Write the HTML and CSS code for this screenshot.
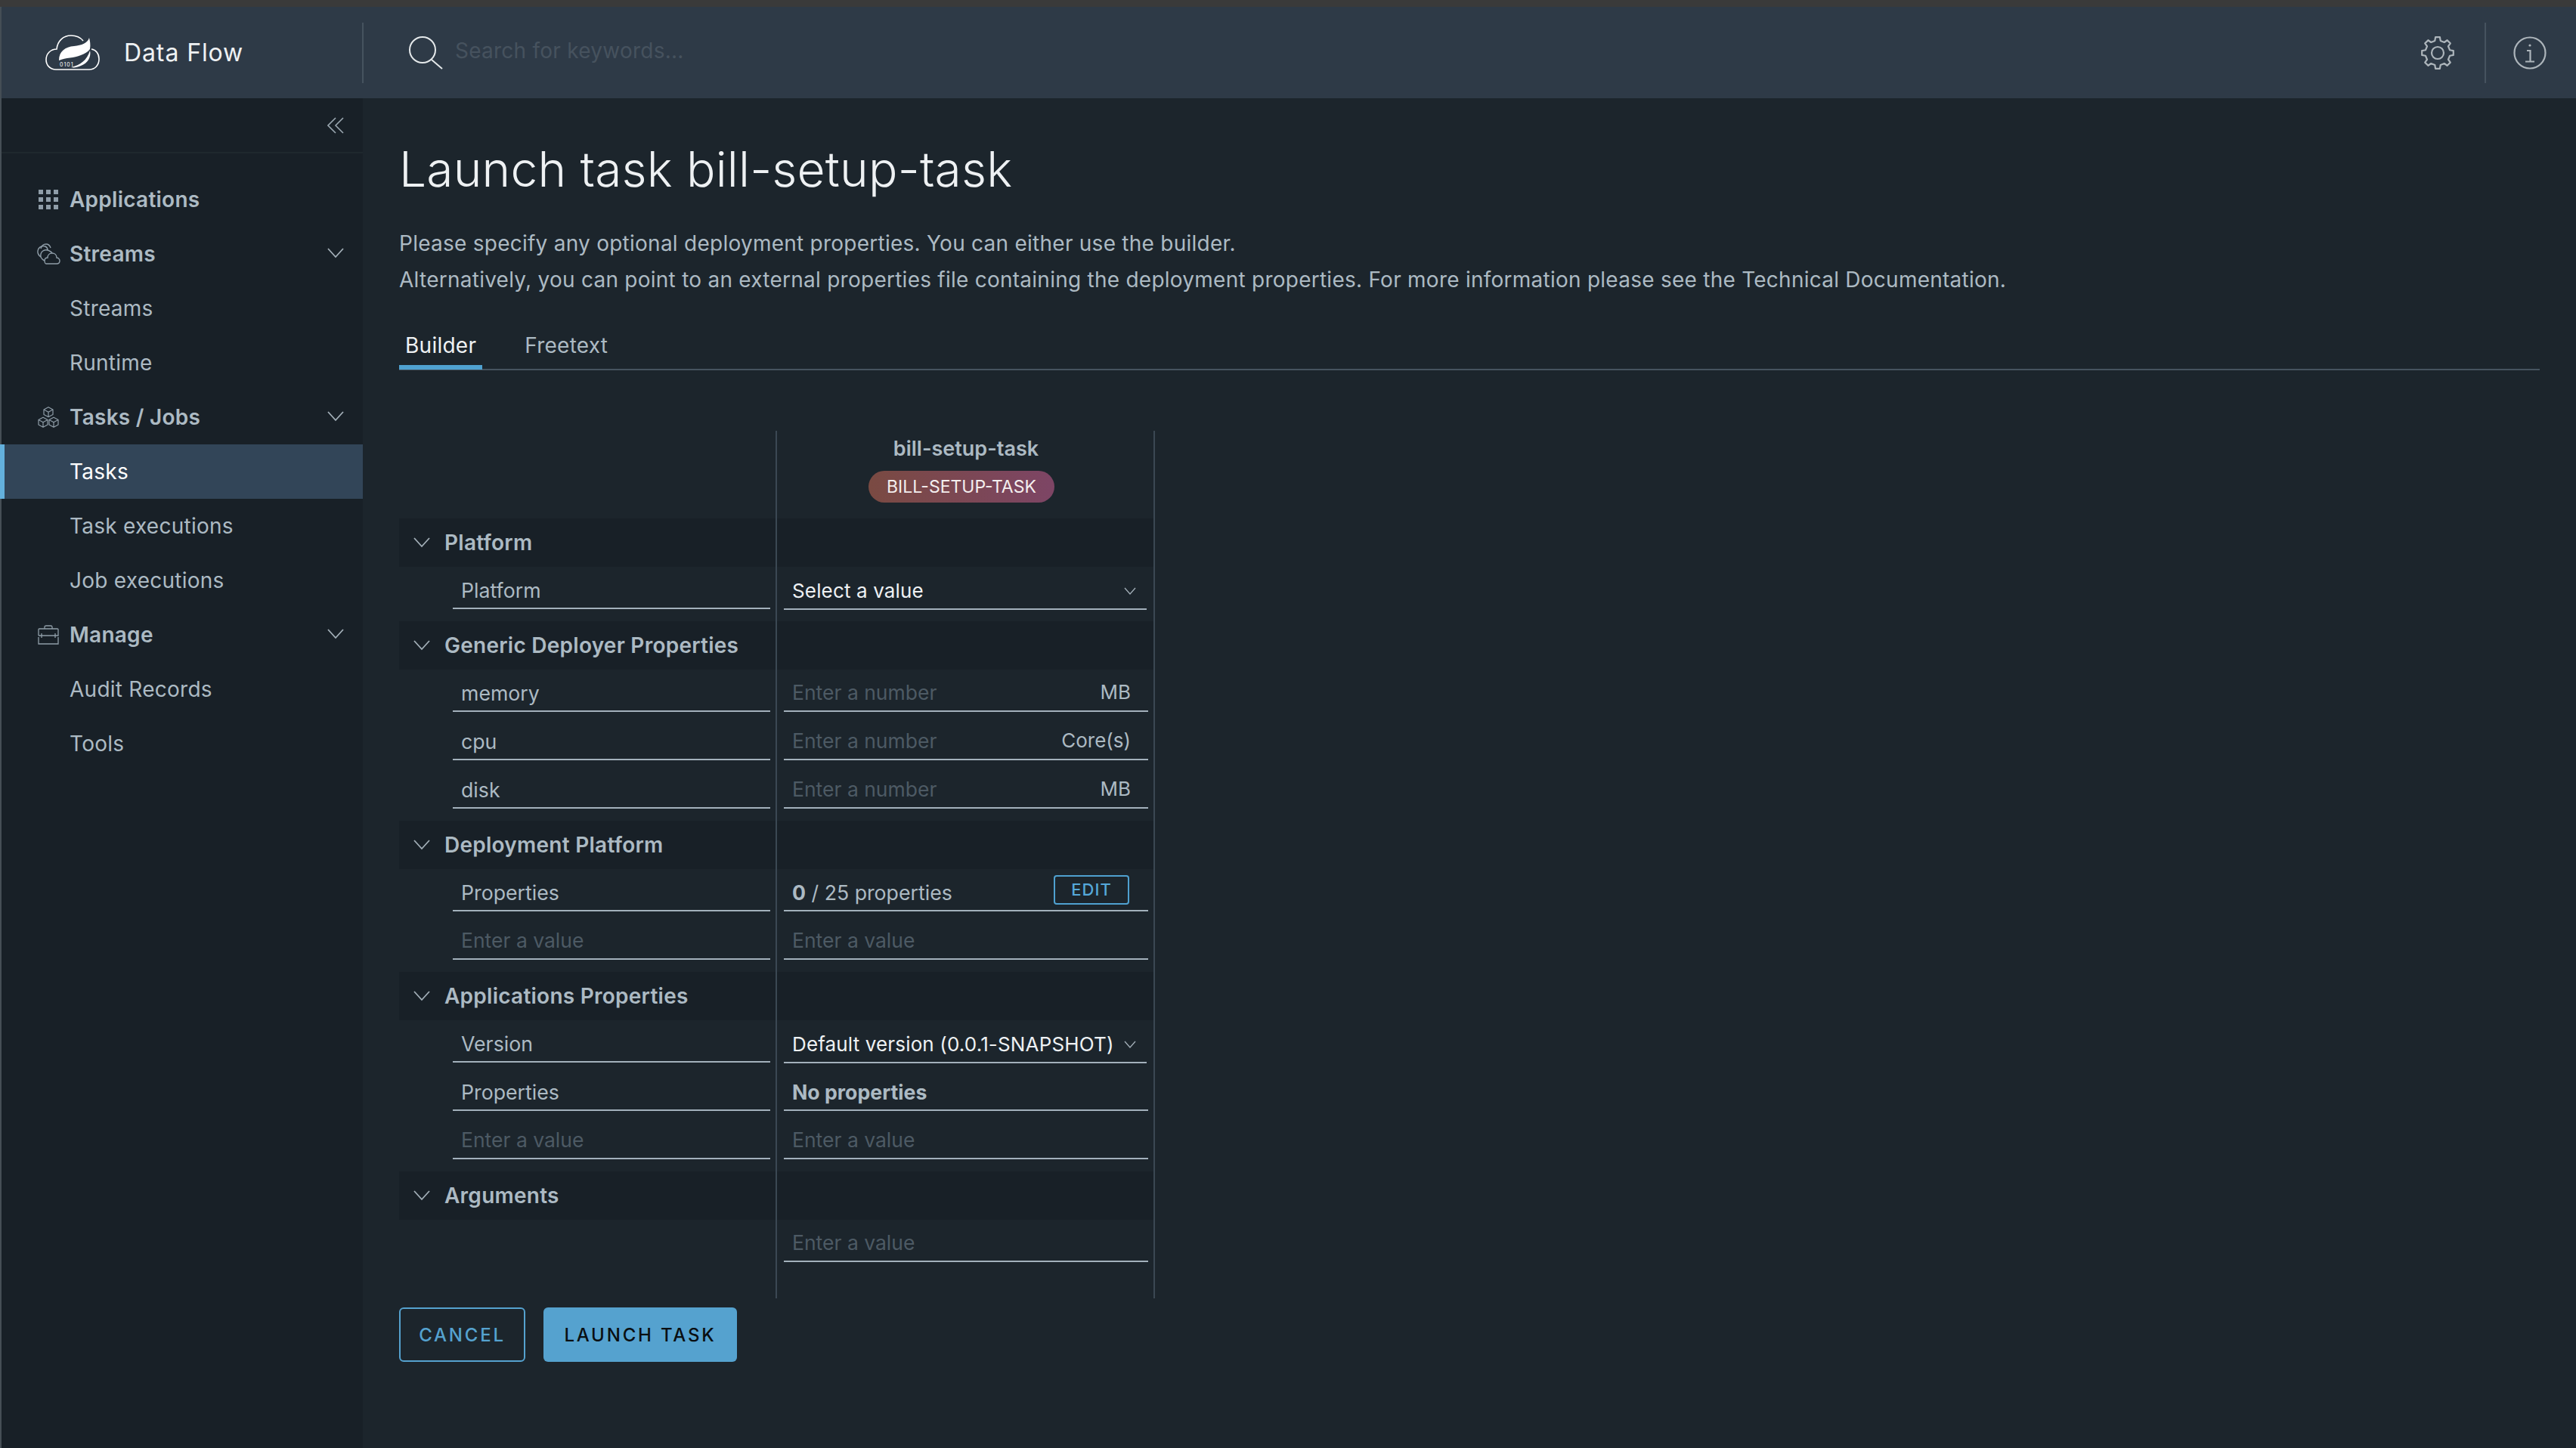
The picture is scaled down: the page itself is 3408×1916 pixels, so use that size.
FILE: index.html
```html
<!DOCTYPE html>
<html lang="en">
	<head>
		<meta charset="UTF-8">
		<title>Data Flow</title>
		<link rel="stylesheet" href="styles.css">
	</head>
	<body>
		<div class="strip"></div>
		<div class="app">
			<header class="topbar">
				<div class="brand">
					<svg class="logo" viewBox="0 0 72 47" fill="none">
						<path d="M50 8C46 3 41 1 34 1C24 1 16 8 15 19C7 19 1 25 1 33C1 40 6 46 14 46H58C66 46 71 40 71 32C71 25 67 20 61 19" stroke="#fff" stroke-width="1.6"/>
						<path d="M58 4C56 11 48 14 38 15C26 16 18 22 18 34C27 30 38 31 47 27C52 25 56 23 59 19C60 13 59 8 58 4Z" fill="#fff"/>
						<path d="M34 43C46 40 55 34 59 21C61 29 56 38 47 41C42 43 38 44 34 43Z" fill="#fff"/>
						<text class="logo-bits" x="19" y="42">0101</text>
					</svg>
					<span class="brand-name">Data Flow</span>
				</div>
				<div class="search">
					<svg class="search-icon" viewBox="0 0 46 44" fill="none" stroke="#e4e8ea" stroke-width="2">
						<circle cx="19" cy="18" r="17"/>
						<path d="M31 31L45 43"/>
					</svg>
					<span class="search-text">Search for keywords...</span>
				</div>
				<svg class="gear" viewBox="-23 -23 46 46" fill="none" stroke="#adb5bb" stroke-width="2.2" stroke-linejoin="round">
					<polygon points="-3.71,-16.08 -2.92,-20.8 2.92,-20.8 3.71,-16.08 8.74,-13.99 12.64,-16.77 16.77,-12.64 13.99,-8.74 16.08,-3.71 20.8,-2.92 20.8,2.92 16.08,3.71 13.99,8.74 16.77,12.64 12.64,16.77 8.74,13.99 3.71,16.08 2.92,20.8 -2.92,20.8 -3.71,16.08 -8.74,13.99 -12.64,16.77 -16.77,12.64 -13.99,8.74 -16.08,3.71 -20.8,2.92 -20.8,-2.92 -16.08,-3.71 -13.99,-8.74 -16.77,-12.64 -12.64,-16.77 -8.74,-13.99"/>
					<circle r="8"/>
				</svg>
				<div class="info-box">
					<svg class="info" viewBox="-23 -23 46 46" fill="none" stroke="#adb5bb" stroke-width="2.2">
						<circle r="20.5"/>
						<circle cy="-10" r="1.6" fill="#adb5bb" stroke="none"/>
						<path d="M-4 -3H0.5V11M-6 11.5H6"/>
					</svg>
				</div>
			</header>
			<div class="layout">
				<nav class="sidebar">
					<div class="collapse">
						<svg class="collapse-icon" viewBox="0 0 22 22" fill="none" stroke="#9aa7b0" stroke-width="1.6">
							<path d="M11 1L1 11L11 21M21 1L11 11L21 21"/>
						</svg>
					</div>
					<ul class="menu">
						<li class="menu-item head">
							<svg class="menu-icon" viewBox="0 0 28 28" fill="#8f9da8">
								<rect x="1" y="1" width="6" height="6"/><rect x="11" y="1" width="6" height="6"/><rect x="21" y="1" width="6" height="6"/>
								<rect x="1" y="11" width="6" height="6"/><rect x="11" y="11" width="6" height="6"/><rect x="21" y="11" width="6" height="6"/>
								<rect x="1" y="21" width="6" height="6"/><rect x="11" y="21" width="6" height="6"/><rect x="21" y="21" width="6" height="6"/>
							</svg>
							Applications
						</li>
						<li class="menu-item head">
							<svg class="menu-icon streams-icon" viewBox="0 0 32 28" fill="none" stroke="#8f9da8" stroke-width="1.4">
								<path d="M13 27H27C30 27 31 25 31 23C31 21 29 19 27 19C27 15 24 13 21 13C17 13 15 16 15 19C12 19 11 21 11 23C11 25 12 27 13 27Z"/>
								<path d="M11 23C7 21 5 18 6 14C7 10 11 8 15 9C18 10 20 11 21 13"/>
								<path d="M6 18C2 15 1 11 3 7C5 4 9 3 12 4C14 5 15 7 15 9"/>
								<path d="M6 7C7 3 10 1 13 1C16 1 18 3 19 6"/>
							</svg>
							Streams
							<svg class="chevron" viewBox="0 0 22 14" fill="none" stroke="#a3afb8" stroke-width="1.8"><path d="M1 1L11 12L21 1"/></svg>
						</li>
						<li class="menu-item">Streams</li>
						<li class="menu-item">Runtime</li>
						<li class="menu-item head">
							<svg class="menu-icon" viewBox="0 0 28 28" fill="none" stroke="#8f9da8" stroke-width="1.2" stroke-linejoin="round">
								<path d="M14 .7L20 4V10.500L14 13.700L8 10.500V4ZM8 4L14 7.200L20 4M14 7.200V13.700"/>
								<path d="M7 14.300L13 17.500V24L7 27.300L1 24V17.500ZM1 17.500L7 20.700L13 17.500M7 20.700V27.300"/>
								<path d="M21 14.300L27 17.500V24L21 27.300L15 24V17.500ZM15 17.500L21 20.700L27 17.500M21 20.700V27.300"/>
							</svg>
							Tasks / Jobs
							<svg class="chevron" viewBox="0 0 22 14" fill="none" stroke="#a3afb8" stroke-width="1.8"><path d="M1 1L11 12L21 1"/></svg>
						</li>
						<li class="menu-item active">Tasks</li>
						<li class="menu-item">Task executions</li>
						<li class="menu-item">Job executions</li>
						<li class="menu-item head">
							<svg class="menu-icon" viewBox="0 0 28 26" fill="none" stroke="#8f9da8" stroke-width="1.300">
								<path d="M9 5V2.500C9 1.500 10 1 11 1H17C18 1 19 1.500 19 2.500V5"/>
								<path d="M1 14V6C1 5.500 1.500 5 2 5H26C26.500 5 27 5.500 27 6V14H23M5 14H1"/>
								<path d="M1 16V25H27V16"/>
								<path d="M5 11V17M23 11V17M5 14H23"/>
							</svg>
							Manage
							<svg class="chevron" viewBox="0 0 22 14" fill="none" stroke="#a3afb8" stroke-width="1.8"><path d="M1 1L11 12L21 1"/></svg>
						</li>
						<li class="menu-item">Audit Records</li>
						<li class="menu-item">Tools</li>
					</ul>
				</nav>
				<main class="content">
					<h1 class="title">Launch task bill-setup-task</h1>
					<p class="intro">Please specify any optional deployment properties. You can either use the builder.<br>Alternatively, you can point to an external properties file containing the deployment properties. For more information please see the Technical Documentation.</p>
					<div class="tabs">
						<span class="tab on">Builder</span>
						<span class="tab">Freetext</span>
					</div>
					<div class="builder">
						<div class="builder-head">
							<div class="app-name">bill-setup-task</div>
							<span class="badge">BILL-SETUP-TASK</span>
						</div>

						<div class="group">
							<div class="section"><svg class="sec-chevron" viewBox="0 0 22 14" fill="none" stroke="#a3afb8" stroke-width="1.800"><path d="M1 1L11 12L21 1"/></svg>Platform</div>
							<div class="row">
								<div class="key">Platform</div>
								<div class="val sel"><span class="strong-val">Select a value</span><svg class="sel-chevron" viewBox="0 0 16 10" fill="none" stroke="#a3afb8" stroke-width="1.300"><path d="M1 1L8 9L15 1"/></svg></div>
							</div>
						</div>

						<div class="group">
							<div class="section"><svg class="sec-chevron" viewBox="0 0 22 14" fill="none" stroke="#a3afb8" stroke-width="1.800"><path d="M1 1L11 12L21 1"/></svg>Generic Deployer Properties</div>
							<div class="row">
								<div class="key">memory</div>
								<div class="val"><span class="hint">Enter a number</span><span class="unit">MB</span></div>
							</div>
							<div class="row">
								<div class="key">cpu</div>
								<div class="val"><span class="hint">Enter a number</span><span class="unit">Core(s)</span></div>
							</div>
							<div class="row">
								<div class="key">disk</div>
								<div class="val"><span class="hint">Enter a number</span><span class="unit">MB</span></div>
							</div>
						</div>

						<div class="group">
							<div class="section"><svg class="sec-chevron" viewBox="0 0 22 14" fill="none" stroke="#a3afb8" stroke-width="1.800"><path d="M1 1L11 12L21 1"/></svg>Deployment Platform</div>
							<div class="row">
								<div class="key">Properties</div>
								<div class="val"><span><b>0</b> / 25 properties</span><span class="edit">EDIT</span></div>
							</div>
							<div class="row">
								<div class="key hint">Enter a value</div>
								<div class="val"><span class="hint">Enter a value</span></div>
							</div>
						</div>

						<div class="group">
							<div class="section"><svg class="sec-chevron" viewBox="0 0 22 14" fill="none" stroke="#a3afb8" stroke-width="1.800"><path d="M1 1L11 12L21 1"/></svg>Applications Properties</div>
							<div class="row">
								<div class="key">Version</div>
								<div class="val sel"><span class="strong-val">Default version (0.0.1-SNAPSHOT)</span><svg class="sel-chevron" viewBox="0 0 16 10" fill="none" stroke="#a3afb8" stroke-width="1.300"><path d="M1 1L8 9L15 1"/></svg></div>
							</div>
							<div class="row">
								<div class="key">Properties</div>
								<div class="val"><b>No properties</b></div>
							</div>
							<div class="row">
								<div class="key hint">Enter a value</div>
								<div class="val"><span class="hint">Enter a value</span></div>
							</div>
						</div>

						<div class="group last">
							<div class="section"><svg class="sec-chevron" viewBox="0 0 22 14" fill="none" stroke="#a3afb8" stroke-width="1.800"><path d="M1 1L11 12L21 1"/></svg>Arguments</div>
							<div class="row">
								<div class="key blank"></div>
								<div class="val"><span class="hint">Enter a value</span></div>
							</div>
						</div>
					</div>
					<div class="actions">
						<button class="btn outline">CANCEL</button>
						<button class="btn solid">LAUNCH TASK</button>
					</div>
				</main>
			</div>
		</div>
	</body>
</html>
```

FILE: styles.css
```css
* {
	box-sizing: border-box;
	list-style: none;
	margin: 0;
	padding: 0;
}

body {
	width: 3408px;
	height: 1916px;
	overflow: hidden;
	background-color: #1c252c;
	color: #acbac3;
	font-family: "Inter", "Liberation Sans", sans-serif;
	font-size: 28px;
	letter-spacing: 0.25px;
}

.strip {
	height: 9px;
	background-color: #3a3a3a;
}

.app {
	height: 1907px;
	border-left: 2px solid #454e55;
	display: flex;
	flex-direction: column;
}

/* top bar */
.topbar {
	height: 121px;
	flex: none;
	display: flex;
	align-items: center;
	background-color: #2e3a47;
}

.brand {
	width: 479px;
	height: 80px;
	display: flex;
	align-items: center;
	padding-left: 58px;
	border-right: 2px solid #46535f;
}

.logo {
	width: 72px;
	height: 47px;
	margin-right: 32px;
}

.logo-bits {
	font-size: 7px;
	fill: #fff;
	letter-spacing: 1px;
}

.brand-name {
	font-size: 32px;
	letter-spacing: 0.9px;
	color: #eef1f3;
}

.search {
	flex: 1;
	display: flex;
	align-items: center;
	padding-left: 59px;
}

.search-icon {
	width: 46px;
	height: 44px;
	margin-right: 16px;
}

.search-text {
	color: #46525e;
	margin-top: -6px;
}

.gear {
	width: 46px;
	height: 46px;
	margin-right: 39px;
}

.info-box {
	width: 121px;
	height: 80px;
	display: flex;
	align-items: center;
	padding-left: 35px;
	border-left: 2px solid #46535f;
}

.info {
	width: 46px;
	height: 46px;
}

/* sidebar */
.layout {
	flex: 1;
	display: flex;
	min-height: 0;
}

.sidebar {
	width: 478px;
	flex: none;
	background-color: #182027;
}

.collapse {
	height: 73px;
	display: flex;
	align-items: center;
	justify-content: flex-end;
	padding-right: 25px;
	border-bottom: 2px solid #1f282e;
}

.collapse-icon {
	width: 22px;
	height: 22px;
}

.menu {
	padding-top: 25px;
}

.menu-item {
	height: 72px;
	display: flex;
	align-items: center;
	padding: 0 0 1px 90px;
	position: relative;
}

.menu-item.head {
	font-weight: 600;
}

.menu-item.active {
	background-color: #324558;
	color: #fff;
	border-left: 6px solid #63b0dc;
	margin-left: -2px;
	padding-left: 86px;
}

.menu-icon {
	width: 28px;
	height: 28px;
	position: absolute;
	left: 48px;
	top: 22px;
}

.streams-icon {
	width: 32px;
	left: 46px;
}

.chevron {
	width: 22px;
	height: 14px;
	position: absolute;
	right: 25px;
	top: 28px;
}

/* main */
.content {
	flex: 1;
	padding: 54px 48px 0;
}

.title {
	font-size: 64px;
	font-weight: 300;
	letter-spacing: 0.2px;
	line-height: 80px;
	color: #eef1f3;
}

.intro {
	margin-top: 34px;
	line-height: 48px;
}

.tabs {
	margin-top: 30px;
	height: 66px;
	display: flex;
	border-bottom: 2px solid #46535f;
}

.tab {
	height: 65px;
	padding: 0 8px;
	margin-right: 48px;
	display: flex;
	align-items: center;
}

.tab.on {
	color: #eef1f3;
	border-bottom: 6px solid #4fa1d0;
	padding-top: 6px;
}

.builder {
	margin-top: 80px;
	width: 1000px;
	position: relative;
	font-size: 26.7px;
	letter-spacing: 0;
}

.builder::before,
.builder::after {
	content: "";
	position: absolute;
	top: 0;
	bottom: 0;
	width: 2px;
	background-color: #3b4853;
}

.builder::before {
	left: 498px;
}

.builder::after {
	left: 998px;
}

.builder-head {
	height: 116px;
	padding-left: 500px;
	text-align: center;
}

.app-name {
	font-size: 27px;
	font-weight: 600;
	line-height: 48px;
}

.badge {
	display: inline-block;
	width: 246px;
	height: 42px;
	line-height: 42px;
	margin-top: 5px;
	margin-right: 12px;
	border-radius: 21px;
	background: linear-gradient(90deg, #7a4a42, #7d4565);
	color: #f4eeee;
	font-size: 23px;
}

.group {
	padding-bottom: 8px;
}

.group.last {
	padding-bottom: 40px;
}

.section {
	height: 64px;
	display: flex;
	align-items: center;
	padding-left: 19px;
	background-color: #182027;
	font-size: 28px;
	font-weight: 600;
	letter-spacing: 0.25px;
}

.sec-chevron {
	width: 22px;
	height: 14px;
	margin-right: 19px;
}

.row {
	height: 64px;
	padding-top: 8px;
	display: flex;
}

.key,
.val {
	height: 48px;
	display: flex;
	align-items: center;
	padding-left: 11px;
	border-bottom: 2px solid #a3b1bc;
}

.key {
	width: 420px;
	margin-left: 71px;
}

.key.blank {
	border-bottom: none;
}

.val {
	width: 482px;
	margin-left: 18px;
	justify-content: space-between;
	padding-right: 23px;
}

.val.sel {
	width: 480px;
	padding-right: 14px;
	height: 49px;
}

.hint {
	color: #4d5a64;
	font-size: 26.5px;
	padding-bottom: 2px;
}

.unit {
	color: #acbac3;
	font-size: 26px;
	padding-bottom: 3px;
}

.strong-val {
	color: #eef1f3;
	font-size: 26px;
	letter-spacing: 0.15px;
}

.sel-chevron {
	width: 16px;
	height: 10px;
}

.edit {
	width: 100px;
	height: 39px;
	margin-right: 2px;
	margin-top: -8px;
	border: 2px solid #4fa1d0;
	border-radius: 4px;
	color: #55a8da;
	font-size: 22px;
	font-weight: 500;
	letter-spacing: 1px;
	text-align: center;
	line-height: 35px;
}

.actions {
	margin-top: 12px;
	display: flex;
	gap: 24px;
}

.btn {
	height: 72px;
	border-radius: 6px;
	font-family: "Inter", "Liberation Sans", sans-serif;
	font-size: 24px;
	font-weight: 500;
	letter-spacing: 2.8px;
}

.btn.outline {
	width: 167px;
	background: none;
	border: 2px solid #55a2cf;
	color: #55a2cf;
}

.btn.solid {
	width: 256px;
	background-color: #55a2cf;
	border: none;
	color: #0a0f12;
}
```
